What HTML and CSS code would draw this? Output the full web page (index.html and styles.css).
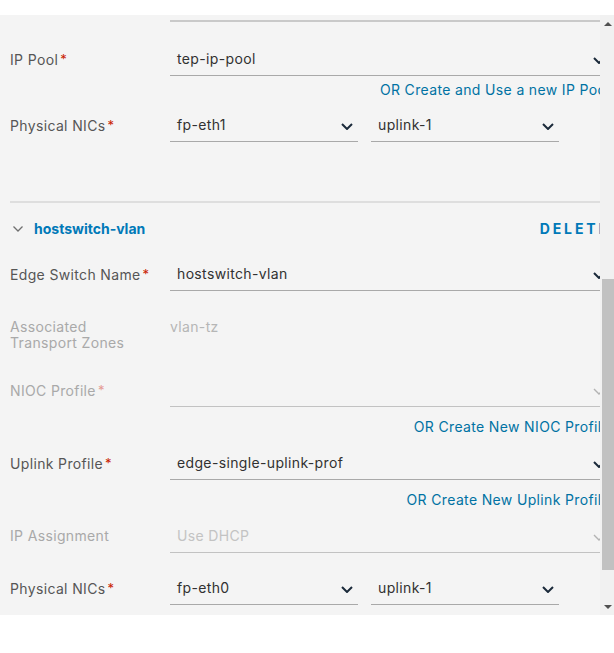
FILE: index.html
```html
<!DOCTYPE html>
<html lang="en">
<head>
<meta charset="utf-8">
<title>Edge Switch Configuration</title>
<link rel="stylesheet" href="styles.css">
</head>
<body>
<div class="window">
  <div class="viewport">
    <div class="content">
      <section class="switch-section first">
        <div class="stub-line"></div>
        <div class="row lead">
          <div class="label">IP Pool<span class="req">*</span></div>
          <div class="select wide"><span class="value">tep-ip-pool</span><svg class="chev" viewBox="0 0 12 7"><path d="M1 1 L6 6 L11 1"/></svg></div>
        </div>
        <div class="link-row tight"><a class="link">OR Create and Use a new IP Pool</a></div>
        <div class="row gap-s">
          <div class="label">Physical NICs<span class="req">*</span></div>
          <div class="select-pair">
            <div class="select half"><span class="value">fp-eth1</span><svg class="chev" viewBox="0 0 12 7"><path d="M1 1 L6 6 L11 1"/></svg></div>
            <div class="select half"><span class="value">uplink-1</span><svg class="chev" viewBox="0 0 12 7"><path d="M1 1 L6 6 L11 1"/></svg></div>
          </div>
        </div>
      </section>

      <section class="switch-section second">
        <header class="sec-head">
          <div class="sec-title">
            <svg class="toggle" viewBox="0 0 10 6"><path d="M0.5 0.5 L5 5 L9.5 0.5"/></svg>
            <span class="name">hostswitch-vlan</span>
          </div>
          <a class="delete">DELETE</a>
        </header>
        <div class="row">
          <div class="label">Edge Switch Name<span class="req">*</span></div>
          <div class="select wide"><span class="value">hostswitch-vlan</span><svg class="chev" viewBox="0 0 12 7"><path d="M1 1 L6 6 L11 1"/></svg></div>
        </div>
        <div class="row static">
          <div class="label multi disabled">Associated Transport Zones</div>
          <div class="static-value">vlan-tz</div>
        </div>
        <div class="row gap-l">
          <div class="label disabled">NIOC Profile<span class="req">*</span></div>
          <div class="select wide is-disabled"><span class="value"></span><svg class="chev" viewBox="0 0 12 7"><path d="M1 1 L6 6 L11 1"/></svg></div>
        </div>
        <div class="link-row"><a class="link">OR Create New NIOC Profile</a></div>
        <div class="row gap-s">
          <div class="label">Uplink Profile<span class="req">*</span></div>
          <div class="select wide"><span class="value">edge-single-uplink-prof</span><svg class="chev" viewBox="0 0 12 7"><path d="M1 1 L6 6 L11 1"/></svg></div>
        </div>
        <div class="link-row"><a class="link">OR Create New Uplink Profile</a></div>
        <div class="row gap-s">
          <div class="label disabled">IP Assignment</div>
          <div class="select wide is-disabled"><span class="value">Use DHCP</span><svg class="chev" viewBox="0 0 12 7"><path d="M1 1 L6 6 L11 1"/></svg></div>
        </div>
        <div class="row">
          <div class="label">Physical NICs<span class="req">*</span></div>
          <div class="select-pair">
            <div class="select half"><span class="value">fp-eth0</span><svg class="chev" viewBox="0 0 12 7"><path d="M1 1 L6 6 L11 1"/></svg></div>
            <div class="select half"><span class="value">uplink-1</span><svg class="chev" viewBox="0 0 12 7"><path d="M1 1 L6 6 L11 1"/></svg></div>
          </div>
        </div>
      </section>
    </div>
  </div>
  <div class="scrollbar">
    <div class="sb-btn"><span class="arrow up"></span></div>
    <div class="sb-track"><div class="sb-thumb"></div></div>
    <div class="sb-btn"><span class="arrow down"></span></div>
  </div>
</div>
</body>
</html>
```

FILE: styles.css
```css
html, body {
  margin: 0;
  padding: 0;
}

body {
  background: #ffffff;
  font-family: Inter, "Noto Sans", "Liberation Sans", sans-serif;
  font-size: 14px;
  letter-spacing: 0.35px;
  color: #565656;
  overflow: hidden;
  width: 614px;
  height: 653px;
}

.window {
  margin-top: 15px;
  height: 600px;
  display: flex;
  background: #f4f4f4;
}

.viewport {
  flex: none;
  width: 600px;
  height: 600px;
  overflow: hidden;
}

.content {
  width: 610px;
  padding-left: 10px;
  box-sizing: border-box;
}

.switch-section.first {
  padding-bottom: 59px;
  border-bottom: 2px solid #dedede;
}

.stub-line {
  margin-left: 160px;
  height: 5px;
  border-bottom: 2px solid #c9c9c9;
}

.row {
  display: flex;
  align-items: flex-start;
  margin-top: 20px;
}

.row.lead { margin-top: 22px; }
.row.gap-s { margin-top: 12px; }
.first .row.gap-s { margin-top: 11px; }
.row.gap-l { margin-top: 22px; }
.row.static { height: 42px; }

.label {
  flex: none;
  width: 160px;
  line-height: 30px;
  color: #565656;
  white-space: nowrap;
}

.label.multi {
  width: 130px;
  margin-right: 30px;
  line-height: 16px;
  padding-top: 8px;
  white-space: normal;
}

.label.disabled {
  color: #a9a9a9;
}

.req {
  color: #c92100;
  font-size: 13px;
  margin-left: 2px;
  vertical-align: 1px;
}

.label.disabled .req {
  color: #e59b93;
}

.select {
  flex: 1;
  height: 32px;
  box-sizing: border-box;
  border-bottom: 1px solid #a9a9a9;
  display: flex;
  align-items: center;
  justify-content: space-between;
  padding: 0 5px 2px 7px;
}

.select .value {
  color: #313131;
  white-space: nowrap;
}

.select.is-disabled {
  border-bottom-color: #c2c2c2;
}

.select.is-disabled .value {
  color: #c3c3c3;
}

.select-pair {
  flex: none;
  display: flex;
  gap: 13px;
}

.select.half {
  flex: none;
  width: 188px;
}

.chev {
  width: 12px;
  height: 7px;
  flex: none;
  margin-top: 3px;
}

.chev path {
  fill: none;
  stroke: #1b2a3a;
  stroke-width: 2;
}

.is-disabled .chev path {
  stroke: #b3b3b3;
  stroke-width: 1.4;
}

.static-value {
  padding-top: 8px;
  line-height: 16px;
  color: #b6b6b6;
}

.link-row {
  margin-top: 11px;
  line-height: 18px;
  text-align: right;
  white-space: nowrap;
}

.link-row.tight {
  margin-top: 5px;
}

.link {
  color: #0072a3;
  cursor: pointer;
}

.sec-head {
  display: flex;
  justify-content: space-between;
  align-items: center;
  padding-top: 16px;
  line-height: 20px;
}

.sec-title {
  display: flex;
  align-items: center;
}

.toggle {
  width: 10px;
  height: 6px;
  margin-left: 3px;
  margin-right: 11px;
}

.toggle path {
  fill: none;
  stroke: #6f6f6f;
  stroke-width: 1.3;
}

.name {
  color: #0079b8;
  font-weight: 700;
  font-size: 14px;
  letter-spacing: 0;
}

.delete {
  color: #0079b8;
  font-weight: 700;
  font-size: 14px;
  letter-spacing: 2.9px;
}

.scrollbar {
  flex: none;
  width: 17px;
  height: 600px;
  background: #f1f1f1;
  display: flex;
  flex-direction: column;
}

.sb-btn {
  flex: none;
  height: 17px;
  display: flex;
  align-items: center;
}

.arrow {
  width: 0;
  height: 0;
  margin-left: 4px;
  border-left: 4px solid transparent;
  border-right: 4px solid transparent;
}

.arrow.up {
  border-bottom: 4px solid #505050;
}

.arrow.down {
  border-top: 4px solid #505050;
}

.sb-track {
  flex: 1;
}

.sb-thumb {
  margin-top: 247px;
  margin-left: 2px;
  width: 13px;
  height: 291px;
  background: #c1c1c1;
}
```
